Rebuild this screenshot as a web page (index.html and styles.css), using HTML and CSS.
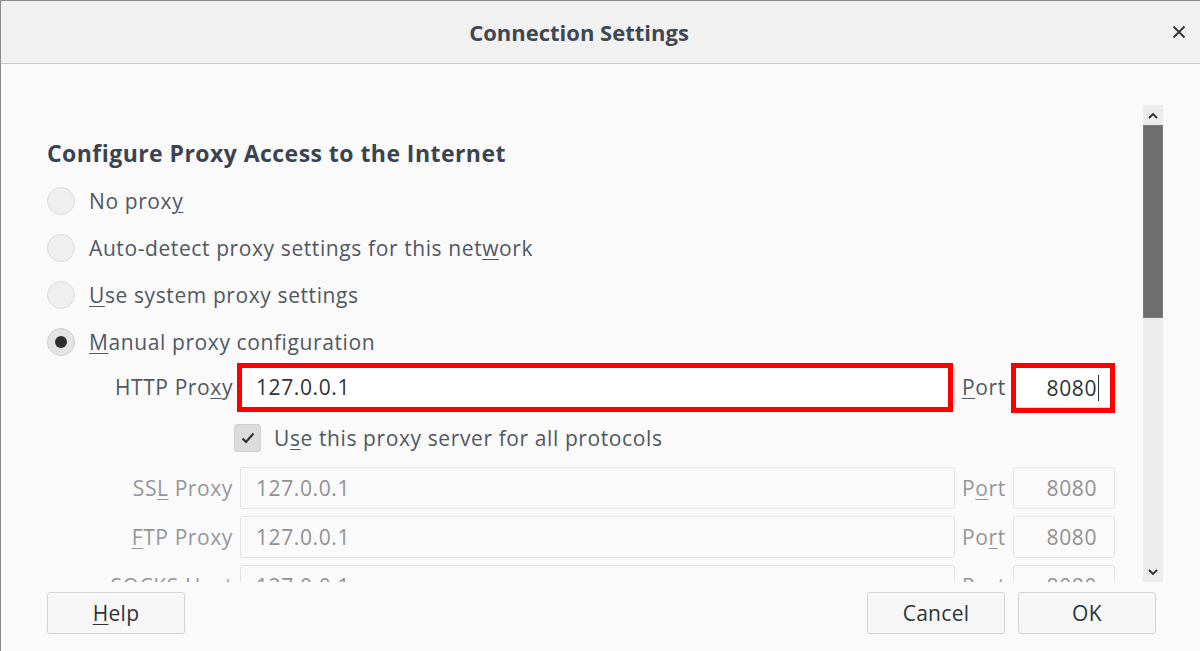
FILE: index.html
```html
<!DOCTYPE html>
<html lang="en">
<head>
<meta charset="utf-8">
<title>Connection Settings</title>
<link rel="stylesheet" href="styles.css">
</head>
<body>
<div class="window">
  <header class="titlebar">
    <div class="title">Connection Settings</div>
    <button class="close" aria-label="Close">
      <svg width="14" height="14" viewBox="0 0 14 14"><path d="M1.5 1.5 L12.5 12.5 M12.5 1.5 L1.5 12.5" stroke="#2e3436" stroke-width="1.8" fill="none"/></svg>
    </button>
  </header>
  <main class="body">
    <div class="scrollbox">
      <div class="content">
        <h1 class="heading">Configure Proxy Access to the Internet</h1>
        <div class="radios">
          <div class="radio-row"><span class="radio"></span><span class="rlabel">No prox<u>y</u></span></div>
          <div class="radio-row"><span class="radio"></span><span class="rlabel">Auto-detect proxy settings for this net<u>w</u>ork</span></div>
          <div class="radio-row"><span class="radio"></span><span class="rlabel"><u>U</u>se system proxy settings</span></div>
          <div class="radio-row"><span class="radio checked"></span><span class="rlabel"><u>M</u>anual proxy configuration</span></div>
        </div>
        <div class="proxy-grid">
          <span class="flabel">HTTP Pro<u>x</u>y</span>
          <div class="field active mark mark-host">127.0.0.1</div>
          <span class="plabel"><u>P</u>ort</span>
          <div class="field active port focused mark mark-port">8080<span class="caret"></span></div>

          <div class="check-row"><span class="checkbox"><svg width="14" height="12" viewBox="0 0 14 12"><path d="M1.5 6.5 L5 10 L12.5 1.5" stroke="#2e3436" stroke-width="2.2" fill="none"/></svg></span><span class="clabel">U<u>s</u>e this proxy server for all protocols</span></div>

          <span class="flabel dim">SS<u>L</u> Proxy</span>
          <div class="field">127.0.0.1</div>
          <span class="plabel dim">P<u>o</u>rt</span>
          <div class="field port">8080</div>

          <span class="flabel dim"><u>F</u>TP Proxy</span>
          <div class="field">127.0.0.1</div>
          <span class="plabel dim">Po<u>r</u>t</span>
          <div class="field port">8080</div>

          <span class="flabel dim">SOCKS Host</span>
          <div class="field">127.0.0.1</div>
          <span class="plabel dim">Por<u>t</u></span>
          <div class="field port">8080</div>
        </div>
      </div>
      <div class="scrollbar">
        <div class="sb-btn"><svg width="10" height="7" viewBox="0 0 10 7"><path d="M1 6 L5 2 L9 6" stroke="#333" stroke-width="1.8" fill="none"/></svg></div>
        <div class="sb-thumb"></div>
        <div class="sb-track"></div>
        <div class="sb-btn"><svg width="10" height="7" viewBox="0 0 10 7"><path d="M1 1 L5 5 L9 1" stroke="#333" stroke-width="1.8" fill="none"/></svg></div>
      </div>
    </div>
    <footer class="buttons">
      <button class="btn"><u>H</u>elp</button>
      <div class="spacer"></div>
      <button class="btn">Cancel</button>
      <button class="btn">OK</button>
    </footer>
  </main>
</div>
</body>
</html>
```
FILE: styles.css
```css
* { box-sizing: border-box; }
html, body { margin: 0; padding: 0; }
body {
  width: 1200px;
  height: 651px;
  overflow: hidden;
  background: #fafafa;
  font-family: "Open Sans", "Noto Sans", sans-serif;
  color: #505862;
}
u { text-decoration-thickness: 1px; text-underline-offset: 3px; }

.window {
  width: 1200px;
  height: 651px;
  border-top: 1px solid #8a8a8a;
  border-left: 1px solid #8a8a8a;
  display: flex;
  flex-direction: column;
  background: #fafafa;
}

.titlebar {
  height: 63px;
  flex: none;
  display: flex;
  align-items: center;
  background: #f1f1f1;
  border-bottom: 1px solid #c9c9c9;
}
.title {
  flex: 1;
  text-align: center;
  font-size: 22px;
  font-weight: 700;
  color: #3f4751;
  padding-right: 1px;
}
.close {
  width: 42px;
  height: 42px;
  border: 0;
  background: transparent;
  display: flex;
  align-items: center;
  justify-content: center;
  padding: 0;
}

.body {
  flex: 1;
  display: flex;
  flex-direction: column;
  padding: 41px 37px 0 46px;
}

.scrollbox {
  height: 477px;
  flex: none;
  display: flex;
}
.content {
  flex: 1;
  overflow: hidden;
  letter-spacing: 0.6px;
}
.heading {
  margin: 0 0 9px;
  padding-top: 33px;
  height: 63px;
  line-height: 30px;
  font-size: 23px;
  font-weight: 700;
  letter-spacing: 0.45px;
  color: #3a4350;
}
.radio-row {
  height: 47px;
  display: flex;
  align-items: center;
  gap: 14px;
  font-size: 21px;
}
.radio {
  width: 28px;
  height: 28px;
  border-radius: 50%;
  background: #efefef;
  border: 1px solid #dcdcdc;
  display: flex;
  align-items: center;
  justify-content: center;
}
.radio.checked {
  background: #e4e4e4;
  border-color: #cfcfcf;
}
.radio.checked::after {
  content: "";
  width: 12px;
  height: 12px;
  border-radius: 50%;
  background: #2f2f2f;
}

.proxy-grid {
  margin-top: 1px;
  display: grid;
  grid-template-columns: 186px 715px 44px 102px;
  grid-template-rows: 42px 45px 42px 42px 42px;
  column-gap: 7px;
  row-gap: 7px;
  align-items: center;
  font-size: 21px;
}
.flabel { text-align: right; color: #505862; white-space: nowrap; }
.plabel { color: #505862; }
.dim { color: #94979a; }

.field {
  height: 42px;
  border: 1px solid #e3e3e3;
  border-radius: 3px;
  background: #fafafa;
  color: #8f9294;
  display: flex;
  align-items: center;
  padding-left: 15px;
  position: relative;
}
.field.active {
  background: #ffffff;
  color: #2e3436;
  border-color: #d6d6d6;
}
.field.port {
  justify-content: flex-end;
  padding-left: 0;
  padding-right: 17px;
}
.field.focused { border-top: 2px solid #4a90d9; }
.caret {
  width: 1px;
  height: 26px;
  background: #2e3436;
  margin-left: 1px;
  margin-right: -2px;
}
.mark::after {
  content: "";
  position: absolute;
  border: 5px solid #ff0000;
  pointer-events: none;
}
.mark-host::after { top: -4px; bottom: -5px; left: -4px; right: 1px; }
.mark-port::after { top: -5px; bottom: -6px; left: -3px; right: -1px; }

.check-row {
  grid-column: 1 / -1;
  height: 45px;
  display: flex;
  align-items: center;
  padding-left: 187px;
  gap: 13px;
  color: #505862;
}
.checkbox {
  width: 27px;
  height: 28px;
  border-radius: 3px;
  background: #dcdcdc;
  border: 1px solid #d0d0d0;
  display: flex;
  align-items: center;
  justify-content: center;
}

.scrollbar {
  width: 20px;
  flex: none;
  display: flex;
  flex-direction: column;
  background: #ececec;
}
.sb-btn {
  height: 20px;
  display: flex;
  align-items: center;
  justify-content: center;
}
.sb-thumb {
  height: 193px;
  background: #6e6e6e;
  border: 1px solid #7a7a7a;
}
.sb-track { flex: 1; }

.buttons {
  margin-top: 10px;
  display: flex;
  gap: 13px;
  margin-right: 7px;
}
.spacer { flex: 1; }
.btn {
  width: 138px;
  height: 42px;
  border: 1px solid #d3d3d3;
  border-radius: 3px;
  background: #f7f7f7;
  font-family: "Open Sans", "Noto Sans", sans-serif;
  font-size: 21px;
  letter-spacing: 0.3px;
  color: #2e3436;
  padding: 0;
}
```
